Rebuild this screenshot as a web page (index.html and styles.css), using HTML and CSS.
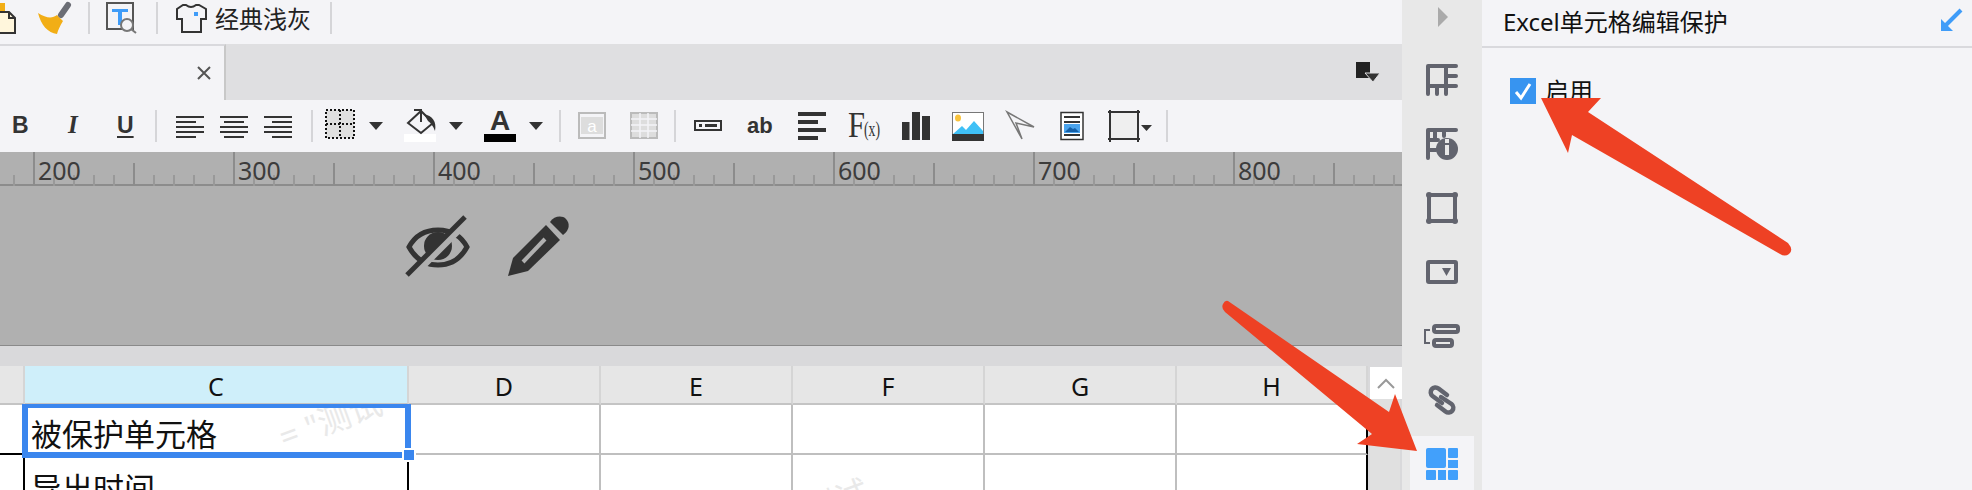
FILE: index.html
```html
<!DOCTYPE html>
<html>

<head>
    <meta charset="utf-8">
    <title>Excel单元格编辑保护</title>
    <link rel="stylesheet" href="styles.css">
</head>

<body>
    <div class="main">
        <div class="toolbar">
            <svg width="16" height="40"><path d="M0 3h5v9H0z" fill="#f2ae16"/><path d="M-4 12H9l6 6v15H-4z" fill="#fff6dc" stroke="#333" stroke-width="2"/><path d="M9 12v6h6" fill="none" stroke="#333" stroke-width="2"/></svg>
            <svg width="34" height="40"><path d="M0 13C8 18 14 19 19 15L25 21C22 26 20 30 19 34C10 33 3 25 0 13Z" fill="#f2ae16"/><path d="M23 15L30 5" stroke="#6b6d75" stroke-width="6" stroke-linecap="round"/></svg>
            <div class="sep"></div>
            <svg width="32" height="40"><rect x="1" y="3" width="26" height="26" fill="#f4f4f7" stroke="#555" stroke-width="2"/><path d="M6 9h16v3H6zM12 9h4v16h-4z" fill="#3f9cf8"/><circle cx="21" cy="25" r="6" fill="#f4f4f7" stroke="#777" stroke-width="2"/><path d="M25 29l5 4" stroke="#777" stroke-width="2"/></svg>
            <div class="sep"></div>
            <svg width="32" height="40"><path d="M7 5H10Q15 9 20 5H23L30 9V19H25V32H6V19H1V9Z" fill="none" stroke="#333" stroke-width="2"/><rect x="18" y="12" width="4" height="4" fill="#3f9cf8"/></svg>
            <span class="theme">经典浅灰</span>
            <div class="sep"></div>
        </div>

        <div class="tabbar">
            <div class="tab">
                <svg width="14" height="14"><path d="M1 1L13 13M13 1L1 13" stroke="#555" stroke-width="2"/></svg>
            </div>
            <svg class="tabmenu" width="24" height="20"><path d="M0 0h14v16H0z" fill="#222"/><path d="M9 11h15l-7 9z" fill="#333" stroke="#dfdfe1" stroke-width="1"/></svg>
        </div>

        <div class="fmtbar">
            <span class="b">B</span>
            <span class="i">I</span>
            <span class="u">U</span>
            <div class="sep"></div>
            <svg width="28" height="36"><path d="M0 9h28M0 14h20M0 19h28M0 24h28M0 29h20" stroke="#333" stroke-width="2"/></svg>
            <svg width="28" height="36"><path d="M0 9h28M4 14h20M0 19h28M0 24h28M4 29h20" stroke="#333" stroke-width="2"/></svg>
            <svg width="28" height="36"><path d="M0 9h28M8 14h20M0 19h28M0 24h28M8 29h20" stroke="#333" stroke-width="2"/></svg>
            <div class="sep"></div>
            <svg width="30" height="36"><rect x="1" y="2" width="28" height="28" fill="#e0e0e0"/><path d="M1 2h28v28H1zM15 2v28M1 16h28" fill="none" stroke="#111" stroke-width="2" stroke-dasharray="2 2"/></svg>
            <svg width="14" height="36"><path d="M0 14h14l-7 8z" fill="#333"/></svg>
            <svg width="32" height="36"><rect y="26" width="32" height="8" fill="#fff"/><path d="M4 15L17 3L29 15L17 25Z" fill="none" stroke="#333" stroke-width="2"/><path d="M10 2h7v12" fill="none" stroke="#333" stroke-width="2"/><path d="M20 6C28 8 33 13 31 23C29 18 27 15 24 13Z" fill="#333"/></svg>
            <svg width="14" height="36"><path d="M0 14h14l-7 8z" fill="#333"/></svg>
            <svg width="32" height="36"><text class="glyph" x="16" y="22" font-size="28" font-weight="bold" text-anchor="middle">A</text><rect y="26" width="32" height="8" fill="#000"/></svg>
            <svg width="14" height="36"><path d="M0 14h14l-7 8z" fill="#333"/></svg>
            <div class="sep"></div>
            <svg width="28" height="36"><rect x="1" y="5" width="26" height="25" fill="#f4f4f7" stroke="#bbb" stroke-width="2"/><rect x="3" y="9" width="22" height="17" fill="#ddd"/><text x="14" y="24" font-size="17" fill="#fff" text-anchor="middle" class="glyph-plain">a</text></svg>
            <svg width="28" height="36"><rect x="1" y="5" width="26" height="25" fill="#ddd" stroke="#bbb" stroke-width="2"/><path d="M1 11h26M1 17h26M1 23h26M10 5v25M18 5v25" stroke="#f4f4f7" stroke-width="1.5"/></svg>
            <div class="sep"></div>
            <svg width="28" height="36"><rect x="1" y="13" width="26" height="9" fill="none" stroke="#333" stroke-width="2"/><path d="M5 16h3v3H5zM11 16h12v3H11z" fill="#333"/></svg>
            <span class="ab">ab</span>
            <svg width="28" height="36"><path d="M0 4h28v4H0zM0 12h20v4H0zM0 20h28v4H0zM0 28h20v4H0z" fill="#333"/></svg>
            <svg width="34" height="36"><text class="serif" x="0" y="29" font-size="36" font-weight="normal" textLength="17" lengthAdjust="spacingAndGlyphs">F</text><text class="serif" x="16" y="28" font-size="22" font-weight="normal" textLength="16" lengthAdjust="spacingAndGlyphs">(x)</text></svg>
            <svg width="28" height="36"><path d="M0 14h7.500v18H0zM10 4h8v28h-8zM20 8h8v24h-8z" fill="#333"/></svg>
            <svg width="32" height="36"><rect x="0.500" y="4.500" width="31" height="28" fill="#fff" stroke="#777"/><path d="M1 26L10 18L14 22L22 13L31 23V26Z" fill="#3fc0f6"/><ellipse cx="6" cy="10" rx="3" ry="3.500" fill="#f9c33c"/><rect y="26" width="32" height="7" fill="#333"/></svg>
            <svg width="30" height="36"><path d="M1 4L28 19L10 15L16 31Z" fill="none" stroke="#777" stroke-width="1.500"/></svg>
            <svg width="24" height="36"><rect x="1" y="4.500" width="22" height="27" fill="#fff" stroke="#333" stroke-width="1.500"/><path d="M4 8h16v2H4zM4 13h16v2H4zM4 26h16v2H4z" fill="#333"/><rect x="4" y="16" width="16" height="9" fill="#4aa3ec"/><path d="M5 24l5-5 3 2 2-1 4 4z" fill="#1560a8"/></svg>
            <svg width="44" height="36"><rect x="2" y="4" width="28" height="27" fill="#efefef"/><path d="M2 2v32M30 2v32M0 4h32M0 31h32" stroke="#333" stroke-width="2"/><path d="M33 17h11l-5.500 6z" fill="#333"/></svg>
            <div class="sep"></div>
        </div>

        <div class="ruler">
            <span>200</span><span>300</span><span>400</span><span>500</span><span>600</span><span>700</span><span>800</span>
        </div>

        <div class="canvas">
            <svg width="64" height="60">
                <path d="M3 31C10 18 20 14 32 14C44 14 54 18 61 31C54 44 44 49 32 49C20 49 10 44 3 31Z" fill="none" stroke="#333" stroke-width="5"/>
                <circle cx="32" cy="30" r="14" fill="#333"/>
                <path d="M63 3L3 63" stroke="#b0b0b0" stroke-width="8"/>
                <path d="M59 1L1 59" stroke="#333" stroke-width="5"/>
            </svg>
            <svg width="62" height="60">
                <path d="M0 60L5 42L38 9L52 24L20 55Z" fill="#333"/>
                <path d="M15 46L37 23" stroke="#b0b0b0" stroke-width="4"/>
                <path d="M42 6C46 0 54 -1 58 3C62 7 62 14 55 19Z" fill="#333"/>
            </svg>
        </div>

        <div class="band"></div>

        <div class="sheet">
            <div class="grid">
                <div class="head"></div>
                <div class="head on">C</div>
                <div class="head">D</div>
                <div class="head">E</div>
                <div class="head">F</div>
                <div class="head">G</div>
                <div class="head">H</div>

                <div class="cell corner"></div>
                <div class="cell first big">被保护单元格<span class="mark mark1">= "测试</span></div>
                <div class="cell"></div>
                <div class="cell"></div>
                <div class="cell"></div>
                <div class="cell"></div>
                <div class="cell edge"></div>

                <div class="cell low sidecell"></div>
                <div class="cell low second big boxed">导出时间</div>
                <div class="cell low"></div>
                <div class="cell low"></div>
                <div class="cell low"><span class="mark mark2">测试</span></div>
                <div class="cell low"></div>
                <div class="cell low edge"></div>
            </div>
            <div class="scroll">
                <div class="scroll-up">
                    <svg width="18" height="11"><path d="M1 10L9 2L17 10" fill="none" stroke="#999" stroke-width="2"/></svg>
                </div>
                <div class="scroll-track"></div>
            </div>
            <div class="selection"><div class="handle"></div></div>
        </div>
    </div>

    <div class="rail">
        <div class="rail-top">
            <svg width="10" height="20"><path d="M0 0L10 10L0 20Z" fill="#aaa"/></svg>
        </div>
        <div class="rail-item">
            <svg width="32" height="32"><path d="M2 2H30M2 2V30M2 22H30M11 22V30M20 2V30M20 12H30" fill="none" stroke="#62646e" stroke-width="4" stroke-linecap="round"/></svg>
        </div>
        <div class="rail-item">
            <svg width="32" height="32"><path d="M2 2H30M2 2V30M2 12H12M2 22H10M9 2V12M18 2V8" fill="none" stroke="#62646e" stroke-width="4" stroke-linecap="round"/><circle cx="21" cy="21" r="11" fill="#62646e"/><path d="M19 11h4v4h-4zM19 17h4v10h-4z" fill="#e8e8e8"/></svg>
        </div>
        <div class="rail-item">
            <svg width="32" height="32"><path d="M3 3H29V29H3Z" fill="none" stroke="#62646e" stroke-width="4"/><g fill="#62646e"><circle cx="3" cy="3" r="3"/><circle cx="29" cy="3" r="3"/><circle cx="3" cy="29" r="3"/><circle cx="29" cy="29" r="3"/></g></svg>
        </div>
        <div class="rail-item">
            <svg width="32" height="24"><rect x="2" y="2" width="28" height="20" rx="1" fill="none" stroke="#62646e" stroke-width="4"/><path d="M16 8h9l-4.500 8z" fill="#62646e"/></svg>
        </div>
        <div class="rail-item">
            <svg width="36" height="24"><rect x="10" y="2" width="24" height="6" rx="2" fill="none" stroke="#62646e" stroke-width="4"/><rect x="10" y="16" width="18" height="6" rx="2" fill="none" stroke="#62646e" stroke-width="4"/><path d="M6 6H1V19H6" fill="none" stroke="#62646e" stroke-width="2"/></svg>
        </div>
        <div class="rail-item">
            <svg width="30" height="30"><path d="M15 18L5.500 11A4.800 4.800 0 0 1 11.500 3.500L20 10" fill="none" stroke="#62646e" stroke-width="4.500" stroke-linecap="round"/><path d="M14 12L24.500 19A4.800 4.800 0 0 1 18.500 26.500L10 20" fill="none" stroke="#62646e" stroke-width="4.500" stroke-linecap="round"/></svg>
        </div>
        <div class="rail-item active">
            <svg width="32" height="32"><g fill="#42a0fb"><rect width="20" height="20" rx="2"/><rect x="22" width="10" height="10" rx="1"/><rect x="22" y="12" width="10" height="8"/><rect y="22" width="10" height="10" rx="1"/><rect x="12" y="22" width="8" height="10"/><rect x="22" y="22" width="10" height="10" rx="1"/></g></svg>
        </div>
    </div>

    <div class="panel">
        <div class="panel-head">
            <span>Excel单元格编辑保护</span>
            <svg width="22" height="23"><path d="M21 1L5 17" stroke="#3f9cf8" stroke-width="4"/><path d="M1 22V10L13 22Z" fill="#3f9cf8"/></svg>
        </div>
        <div class="option">
            <div class="checkbox">
                <svg width="20" height="20"><path d="M3 11L8 17L17 3" fill="none" stroke="#fff" stroke-width="3"/></svg>
            </div>
            <span>启用</span>
        </div>
    </div>

    <svg class="arrows" width="1972" height="490">
        <path d="M1541 98L1601 98L1588 112L1788 243Q1794 250 1789 254Q1785 257 1780 254L1572 135L1568 153Z" fill="#ee4124"/>
        <path d="M1228 301L1389 412L1395 394L1417 451L1357 444L1372 434L1225 312Q1221 308 1223 304Q1225 300 1228 301Z" fill="#ee4124"/>
    </svg>
</body>

</html>
```

FILE: styles.css
```css
* {
    box-sizing: border-box;
}

html, body {
    margin: 0;
    height: 490px;
    overflow: hidden;
}

body {
    position: relative;
    display: flex;
    font-family: "Noto Sans", "Noto Sans CJK SC", sans-serif;
    color: #111;
    background: #f4f4f7;
}

svg {
    display: block;
    overflow: visible;
}

.main {
    width: 1402px;
    flex: none;
    overflow: hidden;
}

.sep {
    width: 2px;
    height: 32px;
    background: #d5d5d8;
}

/* top toolbar */
.toolbar {
    height: 44px;
    display: grid;
    grid-template-columns: 38px 50px 18px 50px 20px 39px 115px 2px;
    align-items: start;
    background: #f4f4f7;
}

.toolbar .sep {
    margin-top: 2px;
}

.theme {
    font-size: 24px;
    line-height: 38px;
    color: #222;
}

/* tabs */
.tabbar {
    height: 56px;
    display: flex;
    align-items: center;
    justify-content: space-between;
    padding-right: 22px;
    background: #dfdfe1;
}

.tab {
    width: 226px;
    height: 56px;
    display: flex;
    align-items: center;
    justify-content: flex-end;
    padding-right: 13px;
    background: #f4f4f7;
    border-top: 2px solid #d9d9dd;
    border-right: 2px solid #c8c8c8;
}

/* format toolbar */
.fmtbar {
    height: 52px;
    display: grid;
    grid-template-columns: 56px 49px 38px 21px 44px 44px 47px 14px 44px 35px 45px 35px 45px 30px 19px 52px 44px 20px 53px 51px 50px 54px 50px 54px 54px 48px 58px 2px;
    align-items: center;
    padding-left: 12px;
    background: #f4f4f7;
    color: #333;
}

.b, .u, .ab {
    font-family: "Liberation Sans", sans-serif;
    font-weight: bold;
    line-height: 24px;
}

.b {
    font-size: 23px;
    margin-top: -3px;
}

.i {
    font-family: "Liberation Serif", serif;
    font-size: 25px;
    font-weight: bold;
    font-style: italic;
    line-height: 24px;
    margin-top: -3px;
}

.u {
    font-size: 23px;
    margin-top: -3px;
    text-decoration: underline;
    text-decoration-thickness: 2px;
    text-underline-offset: 3px;
}

.ab {
    font-size: 22px;
}

.glyph {
    font-family: "Liberation Sans", sans-serif;
    fill: #333;
}

.glyph-plain {
    font-family: "Liberation Sans", sans-serif;
}

.serif {
    font-family: "Liberation Serif", serif;
    fill: #333;
}

/* ruler */
.ruler {
    height: 34px;
    display: flex;
    padding-left: 38px;
    background-color: #b0b0b0;
    background-image:
        linear-gradient(90deg, #8c8c8c 2px, transparent 2px),
        linear-gradient(90deg, #8c8c8c 2px, transparent 2px),
        linear-gradient(90deg, #999 2px, transparent 2px),
        linear-gradient(#8c8c8c, #8c8c8c);
    background-size: 200px 34px, 200px 23px, 20px 11px, 100% 2px;
    background-position: 33px 0, 133px bottom, 13px bottom, 0 bottom;
    background-repeat: repeat-x;
}

.ruler span {
    flex: none;
    width: 200px;
    font-size: 25px;
    line-height: 36px;
    height: 34px;
    color: #3c3c3c;
}

/* grey area under the ruler */
.canvas {
    height: 160px;
    display: flex;
    gap: 38px;
    padding: 30px 0 0 406px;
    background: #b0b0b0;
    border-bottom: 1px solid #8a8a8a;
}

.band {
    height: 20px;
    background: #d9d9db;
}

/* sheet */
.sheet {
    position: relative;
    height: 124px;
    display: flex;
}

.grid {
    width: 1368px;
    flex: none;
    display: grid;
    grid-template-columns: 25px 384px 192px 192px 192px 192px 191px;
    grid-template-rows: 39px 50px 35px;
    background: #fff;
}

.head {
    background: #e6e6e6;
    border-right: 2px solid #d5d5d5;
    border-bottom: 2px solid #c4c4c4;
    text-align: center;
    font-size: 25px;
    line-height: 40px;
}

.head.on {
    background: #cfeffa;
}

.cell {
    position: relative;
    overflow: hidden;
    background: #fff;
    border-right: 2px solid #bfbfbf;
    border-bottom: 2px solid #bfbfbf;
}

.cell.low {
    border-bottom: 0;
}

.cell.corner {
    border-right: 0;
    border-bottom: 2px solid #000;
}

.cell.sidecell {
    border-right: 2px solid #000;
}

.cell.edge {
    border-right: 2px solid #000;
}

.big {
    padding-left: 6px;
    font-size: 31px;
    line-height: 36px;
    white-space: nowrap;
}

.first {
    padding-top: 11px;
}

.second {
    padding-top: 15px;
}

.boxed {
    border-right: 2px solid #000;
}

.mark {
    position: absolute;
    font-size: 33px;
    line-height: 36px;
    color: #e9e9e9;
    white-space: nowrap;
    transform: rotate(-20deg);
}

.mark1 {
    left: 252px;
    top: -3px;
}

.mark2 {
    left: 10px;
    top: 28px;
}

.scroll {
    flex: 1;
    display: flex;
    flex-direction: column;
    background: #d9d9db;
    padding-left: 2px;
}

.scroll-up {
    height: 32px;
    margin-top: 1px;
    display: flex;
    align-items: center;
    justify-content: center;
    background: #fff;
}

.scroll-track {
    flex: 1;
    margin-right: 2px;
    background: #e0e0e0;
}

.selection {
    position: absolute;
    left: 22px;
    top: 38px;
    width: 389px;
    height: 54px;
    border: solid #3a86ee;
    border-width: 4px 6px 6px 6px;
}

.handle {
    position: absolute;
    right: -9px;
    bottom: -8px;
    width: 10px;
    height: 10px;
    background: #3a86ee;
    outline: 2px solid #fff;
}

/* icon rail */
.rail {
    width: 80px;
    flex: none;
    background: #e8e8e8;
}

.rail-top {
    height: 32px;
    padding: 7px 0 0 36px;
}

.rail-item {
    height: 64px;
    display: flex;
    align-items: center;
    justify-content: center;
}

.rail-top + .rail-item {
    margin-top: 16px;
}

.rail-item.active {
    width: 64px;
    height: 56px;
    margin: 4px 0 0 8px;
    background: #f4f4f7;
}

/* right panel */
.panel {
    flex: 1;
    background: #f4f4f7;
}

.panel-head {
    height: 48px;
    display: flex;
    align-items: center;
    justify-content: space-between;
    padding: 0 10px 6px 21px;
    border-bottom: 2px solid #d9d9dd;
    font-size: 24px;
}

.option {
    display: flex;
    align-items: flex-start;
    gap: 9px;
    height: 26px;
    margin: 30px 0 0 28px;
    font-size: 24px;
    line-height: 26px;
}

.checkbox {
    width: 26px;
    height: 26px;
    display: flex;
    align-items: center;
    justify-content: center;
    background: #3794f0;
}

/* the two red callouts lie over everything */
.arrows {
    position: absolute;
    left: 0;
    top: 0;
}
```
